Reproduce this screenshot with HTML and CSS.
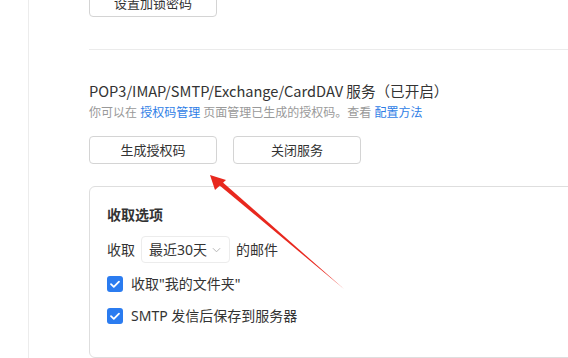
FILE: index.html
```html
<!DOCTYPE html>
<html lang="zh-CN">
<head>
<meta charset="utf-8">
<link rel="stylesheet" href="styles.css">
</head>
<body>
<div class="page">
  <aside class="side"></aside>
  <main class="main">
    <button class="btn btn-top">设置加锁密码</button>
    <div class="divider"></div>
    <h2 class="title">POP3/IMAP/SMTP/Exchange/CardDAV 服务（已开启）</h2>
    <p class="desc">你可以在 <a class="link">授权码管理</a> 页面管理已生成的授权码。查看 <a class="link">配置方法</a></p>
    <div class="actions">
      <button class="btn">生成授权码</button>
      <button class="btn">关闭服务</button>
    </div>
    <section class="box">
      <h3 class="box-title">收取选项</h3>
      <div class="row">
        <span>收取</span>
        <span class="select">最近30天<svg class="chev" viewBox="0 0 10 6" width="9" height="6"><path d="M1 1l4 4 4-4" fill="none" stroke="#b5b5b5" stroke-width="1.1"/></svg></span>
        <span>的邮件</span>
      </div>
      <label class="check"><span class="cb"><svg viewBox="0 0 16 16" width="16" height="16"><path d="M4 8.2l2.8 2.7L12 5.6" fill="none" stroke="#fff" stroke-width="1.8" stroke-linecap="round" stroke-linejoin="round"/></svg></span>收取"我的文件夹"</label>
      <label class="check"><span class="cb"><svg viewBox="0 0 16 16" width="16" height="16"><path d="M4 8.2l2.8 2.7L12 5.6" fill="none" stroke="#fff" stroke-width="1.8" stroke-linecap="round" stroke-linejoin="round"/></svg></span>SMTP 发信后保存到服务器</label>
    </section>
  </main>
  <svg class="arrow" width="568" height="358" viewBox="0 0 568 358">
    <polygon points="344,289 216,182.5 219.5,179.5" fill="#e8281e"/>
    <polygon points="210,175 226,180 215,190" fill="#e8281e"/>
  </svg>
</div>
</body>
</html>
```
FILE: styles.css
```css
html, body {
  margin: 0;
  padding: 0;
  background: #fff;
  overflow: hidden;
}
body {
  font-family: "Noto Sans", "Noto Sans CJK SC", sans-serif;
  color: #333;
  width: 568px;
  height: 358px;
}
.page {
  position: relative;
  display: flex;
  height: 358px;
  overflow: hidden;
}
.side {
  width: 28px;
  flex: none;
  border-right: 1px solid #ececec;
}
.main {
  flex: 1;
  padding-left: 60px;
  display: flex;
  flex-direction: column;
  align-items: flex-start;
}
.btn {
  width: 128px;
  height: 28px;
  background: #fff;
  border: 1px solid #d4d4d4;
  border-radius: 4px;
  font-family: "Noto Sans CJK SC", sans-serif;
  font-size: 13px;
  color: #333;
  padding: 0;
  line-height: 26px;
}
.btn-top {
  margin-top: -11px;
}
.divider {
  align-self: stretch;
  height: 1px;
  background: #ebebeb;
  margin-top: 32px;
}
.title {
  margin: 30px 0 0;
  font-family: "Noto Sans CJK SC", sans-serif;
  font-size: 14.6px;
  font-weight: 400;
  line-height: 22px;
  color: #333;
}
.desc {
  margin: 2px 0 0;
  font-size: 12px;
  line-height: 18px;
  color: #999;
}
.link {
  color: #2f7ee6;
}
.actions {
  display: flex;
  gap: 16px;
  margin-top: 14px;
}
.box {
  margin-top: 22px;
  width: 520px;
  height: 172px;
  box-sizing: border-box;
  border: 1px solid #dedede;
  border-radius: 6px;
  padding: 17px 0 0 17px;
  font-size: 14px;
}
.box-title {
  margin: 0;
  font-size: 14px;
  font-weight: 700;
  line-height: 22px;
  color: #333;
}
.row {
  display: flex;
  align-items: center;
  gap: 6px;
  margin-top: 10px;
  line-height: 20px;
}
.select {
  display: inline-flex;
  align-items: center;
  height: 27px;
  box-sizing: border-box;
  padding: 0 8px 0 7px;
  border: 1px solid #ececec;
  border-radius: 4px;
  gap: 5px;
}
.chev {
  margin-top: 1px;
}
.check {
  display: flex;
  align-items: center;
  gap: 8px;
  line-height: 20px;
  height: 20px;
  margin-top: 11px;
}
.check + .check {
  margin-top: 12px;
}
.cb {
  width: 16px;
  height: 16px;
  border-radius: 3px;
  background: #2b7cf0;
  display: inline-flex;
}
.arrow {
  position: absolute;
  left: 0;
  top: 0;
  pointer-events: none;
}
```
